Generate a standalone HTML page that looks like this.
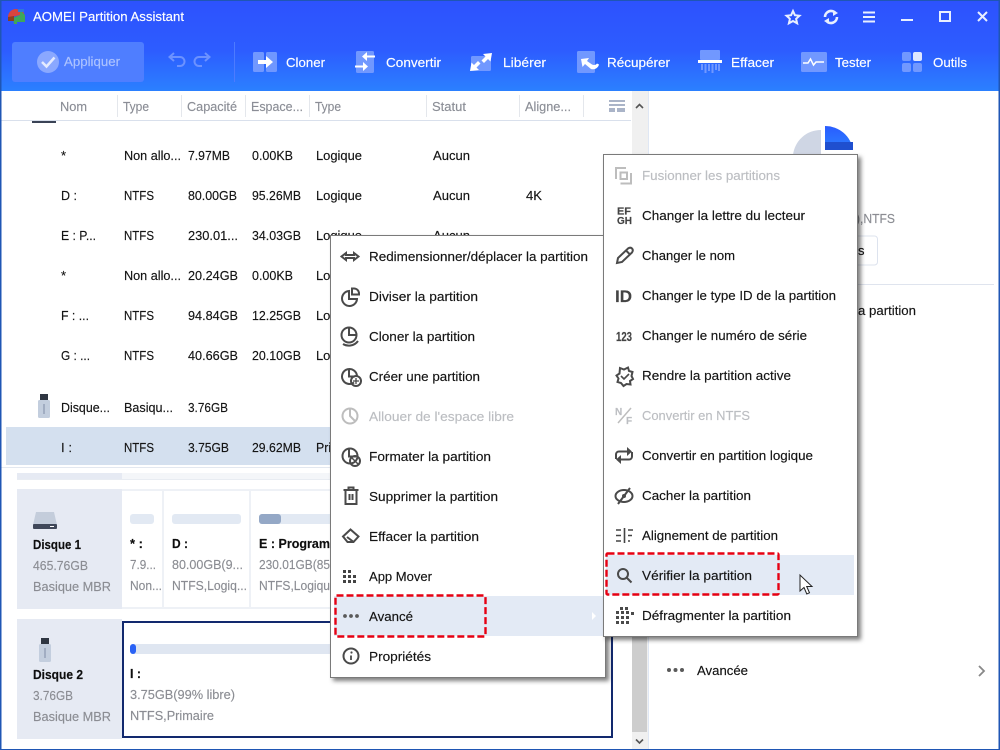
<!DOCTYPE html>
<html lang="fr"><head><meta charset="utf-8"><title>AOMEI Partition Assistant</title>
<style>
html,body{margin:0;padding:0;background:#fff;width:1000px;height:750px;overflow:hidden}
svg{display:block}
text{font-family:"Liberation Sans",sans-serif;font-size:13px;color:#141414;fill:currentColor;stroke:currentColor;stroke-width:.15px}
.h text{color:#8b8e96}
.g{color:#8b8d93}
.d{color:#bcbec2}
.b{font-weight:bold;color:#0e0e0e}
.w{color:#fff}
.ic{color:#444;font-weight:bold}
.i{fill:none;stroke:#4a4a4a;stroke-width:2}
.id{fill:none;stroke:#bdbdbd;stroke-width:2}
</style></head><body>
<svg width="1000" height="750" viewBox="0 0 1000 750" xmlns="http://www.w3.org/2000/svg">
<defs>
<linearGradient id="hd" x1="0" y1="0" x2="0" y2="1"><stop offset="0" stop-color="#2d52fd"/><stop offset=".55" stop-color="#2d5cff"/><stop offset="1" stop-color="#2b80ff"/></linearGradient>
<linearGradient id="pb" x1="0" y1="0" x2="0" y2="1"><stop offset="0" stop-color="#2a5cff"/><stop offset="1" stop-color="#2c80ff"/></linearGradient>
<filter id="sh" x="-5%" y="-5%" width="112%" height="112%"><feDropShadow dx="3" dy="3" stdDeviation="2" flood-color="#000" flood-opacity=".5"/></filter>
</defs>
<rect width="1000" height="750" fill="#fff"/>
<!-- title bar -->
<rect width="1000" height="91" fill="url(#hd)"/>
<rect width="1000" height="1" fill="#1f56b4"/>
<g>
<path d="M8 17a8 8 0 0 1 8-8l5 1 3 3v1l-16 4z" fill="#d8433f"/>
<path d="M20 10l5 5v7h-8v2h-3l-1-6 7-3z" fill="#3fa65a"/>
<path d="M8 17l6-1v5H8z" fill="#8c3f1e"/>
<rect x="18" y="9" width="6" height="3" fill="#2d78d8"/>
</g>
<text class="w" x="33" y="21" textLength="151" lengthAdjust="spacingAndGlyphs">AOMEI Partition Assistant</text>
<!-- window controls -->
<path d="M793 11l1.900 4.200 4.600.5-3.400 3.100 1 4.500-4.100-2.300-4.100 2.300 1-4.500-3.400-3.100 4.600-.5z" fill="none" stroke="#e8efff" stroke-width="2"/>
<path d="M825 17a6 6 0 0 1 10.500-4M837 17a6 6 0 0 1-10.500 4" fill="none" stroke="#e8efff" stroke-width="2.600"/>
<path d="M833 10l5 3-5 3zM829 18l-5 3 5 3z" fill="#e8efff"/>
<path d="M863 12.500h12M863 17h12M863 21.500h12" stroke="#e8efff" stroke-width="2"/>
<path d="M901 20h12" stroke="#e8efff" stroke-width="2"/>
<rect x="940" y="12" width="10" height="9" fill="none" stroke="#e8efff" stroke-width="2"/>
<path d="M978 12l9 9M987 12l-9 9" stroke="#e8efff" stroke-width="2"/>
<!-- toolbar -->
<rect x="12" y="42" width="132" height="40" rx="3" fill="#4f7eff"/>
<circle cx="48" cy="62" r="11" fill="#8aa8ff"/>
<path d="M42 62l4.500 4.500 8-9" fill="none" stroke="#e4ebff" stroke-width="2.500"/>
<text x="64" y="66" textLength="56" lengthAdjust="spacingAndGlyphs" style="color:#adc3ff">Appliquer</text>
<path d="M171 57h9a4 4 0 0 1 0 9h-3M174 53l-4.500 4 4.500 4" fill="none" stroke="#6c92ff" stroke-width="2"/>
<path d="M208 57h-9a4 4 0 0 0 0 9h3M205 53l4.500 4-4.500 4" fill="none" stroke="#6c92ff" stroke-width="2"/>
<rect x="234" y="42" width="1" height="40" fill="#4d7bff"/>
<!-- Cloner -->
<rect x="253" y="52" width="11" height="20" rx="1.500" fill="#7198ff"/><rect x="266" y="52" width="11" height="20" rx="1.500" fill="#6f97ff"/>
<path d="M258 60h8v-4l7 6-7 6v-4h-8z" fill="#fff"/>
<text class="w" x="286" y="67" textLength="39" lengthAdjust="spacingAndGlyphs">Cloner</text>
<!-- Convertir -->
<rect x="356" y="51" width="18" height="22" rx="1.500" fill="#7198ff"/>
<path d="M375 55.500h-8v-3.500l-5 4.500 5 4.500v-3.500h8zM355 65.500h8v-3.500l5 4.500-5 4.500v-3.500h-8z" fill="#fff"/>
<text class="w" x="386" y="67" textLength="55" lengthAdjust="spacingAndGlyphs">Convertir</text>
<!-- Liberer -->
<rect x="471" y="56" width="20" height="15" rx="1.500" fill="#7198ff"/>
<path d="M470 71l9-1-2.500-2.500 4-4-2.500-2.500-4 4-2.500-2.500zM492 53l-9 1 2.500 2.500-4 4 2.500 2.500 4-4 2.500 2.500z" fill="#fff"/>
<text class="w" x="503" y="67" textLength="43" lengthAdjust="spacingAndGlyphs">Libérer</text>
<!-- Recuperer -->
<rect x="577" y="51" width="18" height="22" rx="1.500" fill="#7198ff"/>
<path d="M581 59l8-1-2 3 5 3.500c2 1 4 .5 5-1l2 1c-1 4-5 5.500-8 4.500l-6-5-2.500 3z" fill="#fff"/>
<text class="w" x="607" y="67" textLength="63" lengthAdjust="spacingAndGlyphs">Récupérer</text>
<!-- Effacer -->
<rect x="700" y="50" width="20" height="10" rx="1" fill="#7198ff"/>
<rect x="698" y="60" width="24" height="3" fill="#fff"/>
<path d="M702 64v6M705.500 64v9M709 64v7M712.500 64v9M716 64v6M719 64v7" stroke="#7198ff" stroke-width="2"/>
<text class="w" x="731" y="67" textLength="43" lengthAdjust="spacingAndGlyphs">Effacer</text>
<!-- Tester -->
<rect x="801" y="52" width="26" height="20" rx="1.500" fill="#7198ff"/>
<path d="M803 63h5l2.500-4 3 6 2.500-3h8" fill="none" stroke="#fff" stroke-width="1.500"/>
<text class="w" x="835" y="67" textLength="36" lengthAdjust="spacingAndGlyphs">Tester</text>
<!-- Outils -->
<rect x="902" y="52" width="9" height="9" rx="2" fill="#7198ff"/><rect x="913" y="52" width="9" height="9" rx="2" fill="#dfe7ff"/><rect x="902" y="63" width="9" height="9" rx="2" fill="#7198ff"/><rect x="913" y="63" width="9" height="9" rx="2" fill="#7198ff"/>
<text class="w" x="933" y="67" textLength="34" lengthAdjust="spacingAndGlyphs">Outils</text>

<!-- table header -->
<g class="h">
<text x="60" y="111" textLength="27" lengthAdjust="spacingAndGlyphs">Nom</text>
<text x="123" y="111" textLength="26" lengthAdjust="spacingAndGlyphs">Type</text>
<text x="187" y="111" textLength="50" lengthAdjust="spacingAndGlyphs">Capacité</text>
<text x="251" y="111" textLength="52" lengthAdjust="spacingAndGlyphs">Espace...</text>
<text x="315" y="111" textLength="26" lengthAdjust="spacingAndGlyphs">Type</text>
<text x="432" y="111" textLength="34" lengthAdjust="spacingAndGlyphs">Statut</text>
<text x="525" y="111" textLength="46" lengthAdjust="spacingAndGlyphs">Aligne...</text>
</g>
<path d="M117.500 95v22M181.500 95v22M245.500 95v22M309.500 95v22M426.500 95v22M519.500 95v22M583.500 95v22" stroke="#e4e7ec"/>
<rect x="1" y="120" width="630" height="1" fill="#d9e0ec"/>
<path d="M609 100h16v2h-16zM609 104h16v2h-16zM609 108h6v4h-6zM617 108h8v4h-8z" fill="#aab4c8"/>
<rect x="32" y="121" width="24" height="2" fill="#3a4356"/>
<!-- scrollbar -->
<rect x="632" y="91" width="16" height="659" fill="#f0f0f0"/>
<rect x="632" y="636" width="15" height="96" fill="#cdcdcd"/>
<rect x="648" y="91" width="1" height="658" fill="#dfe7f4"/>
<path d="M636 108l3.500-3.500 3.500 3.500M636 739.500l3.500 3.500 3.500-3.500" fill="none" stroke="#555" stroke-width="1.600"/>

<!-- rows -->
<rect x="6" y="427" width="326" height="38" fill="#d4e0ef"/>
<rect x="1" y="467" width="631" height="1" fill="#e3e8f0"/>
<g>
<text x="61" y="160">*</text><text x="124" y="160" textLength="57" lengthAdjust="spacingAndGlyphs">Non allo...</text><text x="188" y="160" textLength="42" lengthAdjust="spacingAndGlyphs">7.97MB</text><text x="252" y="160" textLength="41" lengthAdjust="spacingAndGlyphs">0.00KB</text><text x="316" y="160" textLength="46" lengthAdjust="spacingAndGlyphs">Logique</text><text x="433" y="160" textLength="37" lengthAdjust="spacingAndGlyphs">Aucun</text>
<text x="61" y="200" textLength="16" lengthAdjust="spacingAndGlyphs">D :</text><text x="124" y="200" textLength="30" lengthAdjust="spacingAndGlyphs">NTFS</text><text x="188" y="200" textLength="49" lengthAdjust="spacingAndGlyphs">80.00GB</text><text x="252" y="200" textLength="49" lengthAdjust="spacingAndGlyphs">95.26MB</text><text x="316" y="200" textLength="46" lengthAdjust="spacingAndGlyphs">Logique</text><text x="433" y="200" textLength="37" lengthAdjust="spacingAndGlyphs">Aucun</text><text x="526" y="200" textLength="16" lengthAdjust="spacingAndGlyphs">4K</text>
<text x="61" y="240" textLength="35" lengthAdjust="spacingAndGlyphs">E : P...</text><text x="124" y="240" textLength="30" lengthAdjust="spacingAndGlyphs">NTFS</text><text x="188" y="240" textLength="50" lengthAdjust="spacingAndGlyphs">230.01...</text><text x="252" y="240" textLength="49" lengthAdjust="spacingAndGlyphs">34.03GB</text><text x="316" y="240" textLength="46" lengthAdjust="spacingAndGlyphs">Logique</text><text x="433" y="240" textLength="37" lengthAdjust="spacingAndGlyphs">Aucun</text>
<text x="61" y="280">*</text><text x="124" y="280" textLength="57" lengthAdjust="spacingAndGlyphs">Non allo...</text><text x="188" y="280" textLength="50" lengthAdjust="spacingAndGlyphs">20.24GB</text><text x="252" y="280" textLength="41" lengthAdjust="spacingAndGlyphs">0.00KB</text><text x="316" y="280" textLength="46" lengthAdjust="spacingAndGlyphs">Logique</text>
<text x="61" y="320" textLength="28" lengthAdjust="spacingAndGlyphs">F : ...</text><text x="124" y="320" textLength="30" lengthAdjust="spacingAndGlyphs">NTFS</text><text x="188" y="320" textLength="50" lengthAdjust="spacingAndGlyphs">94.84GB</text><text x="252" y="320" textLength="49" lengthAdjust="spacingAndGlyphs">12.25GB</text><text x="316" y="320" textLength="46" lengthAdjust="spacingAndGlyphs">Logique</text>
<text x="61" y="360" textLength="29" lengthAdjust="spacingAndGlyphs">G : ...</text><text x="124" y="360" textLength="30" lengthAdjust="spacingAndGlyphs">NTFS</text><text x="188" y="360" textLength="50" lengthAdjust="spacingAndGlyphs">40.66GB</text><text x="252" y="360" textLength="49" lengthAdjust="spacingAndGlyphs">20.10GB</text><text x="316" y="360" textLength="46" lengthAdjust="spacingAndGlyphs">Logique</text>
<text x="61" y="412" textLength="49" lengthAdjust="spacingAndGlyphs">Disque...</text><text x="124" y="412" textLength="49" lengthAdjust="spacingAndGlyphs">Basiqu...</text><text x="188" y="412" textLength="40" lengthAdjust="spacingAndGlyphs">3.76GB</text>
<text x="61" y="452" textLength="11" lengthAdjust="spacingAndGlyphs">I :</text><text x="124" y="452" textLength="30" lengthAdjust="spacingAndGlyphs">NTFS</text><text x="188" y="452" textLength="41" lengthAdjust="spacingAndGlyphs">3.75GB</text><text x="252" y="452" textLength="49" lengthAdjust="spacingAndGlyphs">29.62MB</text><text x="316" y="452" textLength="46" lengthAdjust="spacingAndGlyphs">Primaire</text>
</g>
<!-- USB icon in list -->
<rect x="40" y="394" width="8" height="6" fill="#2f3642"/><rect x="38" y="400" width="12" height="18" rx="1.500" fill="#c3cede"/><path d="M44 404v10" stroke="#7f8ca6"/>

<!-- bottom pane -->
<rect x="17" y="473" width="105" height="6" fill="#e6eaf3"/>
<rect x="122" y="473" width="510" height="6" fill="#f4f6f9"/>
<rect x="17" y="479" width="615" height="1" fill="#e8ecf2"/>
<rect x="17" y="489" width="105" height="120" fill="#e6eaf3"/>
<rect x="122" y="489" width="510" height="120" fill="#eef1f6"/>
<rect x="122" y="491" width="40" height="116" fill="#fff"/><rect x="164" y="491" width="85" height="116" fill="#fff"/><rect x="251" y="491" width="100" height="116" fill="#fff"/>
<path d="M36 512h18l3 13H33z" fill="#c4cddb"/><rect x="33" y="524" width="24" height="5" rx="1" fill="#3f4759"/><path d="M50 526.500h4" stroke="#fff"/>
<text class="b" x="33" y="549" textLength="48" lengthAdjust="spacingAndGlyphs">Disque 1</text>
<text class="g" x="33" y="570" textLength="55" lengthAdjust="spacingAndGlyphs">465.76GB</text>
<text class="g" x="33" y="591" textLength="78" lengthAdjust="spacingAndGlyphs">Basique MBR</text>
<rect x="130" y="514" width="24" height="10" rx="3" fill="#e2e9f3"/>
<rect x="172" y="514" width="69" height="10" rx="3" fill="#e2e9f3"/>
<rect x="259" y="514" width="90" height="10" rx="3" fill="#e2e9f3"/><rect x="259" y="514" width="22" height="10" rx="3" fill="#94a8c6"/>
<text class="b" x="130" y="548" textLength="13" lengthAdjust="spacingAndGlyphs">* :</text>
<text class="g" x="130" y="569" textLength="26" lengthAdjust="spacingAndGlyphs">7.9...</text>
<text class="g" x="130" y="590" textLength="32" lengthAdjust="spacingAndGlyphs">Non...</text>
<text class="b" x="172" y="548" textLength="16" lengthAdjust="spacingAndGlyphs">D :</text>
<text class="g" x="172" y="569" textLength="71" lengthAdjust="spacingAndGlyphs">80.00GB(9...</text>
<text class="g" x="172" y="590" textLength="75" lengthAdjust="spacingAndGlyphs">NTFS,Logiq...</text>
<text class="b" x="259" y="548" textLength="71" lengthAdjust="spacingAndGlyphs">E : Program</text>
<text class="g" x="259" y="569" textLength="71" lengthAdjust="spacingAndGlyphs">230.01GB(85</text>
<text class="g" x="259" y="590" textLength="71" lengthAdjust="spacingAndGlyphs">NTFS,Logiqu</text>

<rect x="17" y="619" width="105" height="120" fill="#e6eaf3"/>
<rect x="123" y="622" width="489" height="115" fill="#fff" stroke="#12296e" stroke-width="2"/>
<rect x="41" y="638" width="8" height="6" fill="#2f3642"/><rect x="39" y="644" width="12" height="18" rx="1.500" fill="#c3cede"/><path d="M45 648v10" stroke="#7f8ca6"/>
<text class="b" x="33" y="679" textLength="50" lengthAdjust="spacingAndGlyphs">Disque 2</text>
<text class="g" x="33" y="700" textLength="40" lengthAdjust="spacingAndGlyphs">3.76GB</text>
<text class="g" x="33" y="721" textLength="78" lengthAdjust="spacingAndGlyphs">Basique MBR</text>
<rect x="130" y="644" width="475" height="10" rx="3" fill="#dfe6f1"/><rect x="130" y="644" width="6" height="10" rx="3" fill="#2a62f5"/>
<text class="b" x="130" y="678" textLength="11" lengthAdjust="spacingAndGlyphs">I :</text>
<text class="g" x="130" y="699" textLength="105" lengthAdjust="spacingAndGlyphs">3.75GB(99% libre)</text>
<text class="g" x="130" y="720" textLength="84" lengthAdjust="spacingAndGlyphs">NTFS,Primaire</text>

<!-- right pane -->
<path d="M821 130v24h28v8h-56v-7a28 28 0 0 1 28-25z" fill="#cfd6e4"/>
<path d="M825 126a28 28 0 0 1 28 24h-28z" fill="url(#pb)"/><rect x="825" y="142" width="28" height="8" fill="#1f4fcf"/>
<text class="g" x="856" y="223" textLength="39" lengthAdjust="spacingAndGlyphs">),NTFS</text>
<rect x="780" y="236" width="97.500" height="29" rx="3" fill="#fff" stroke="#dde3ee"/>
<text x="858" y="255">s</text>
<rect x="855" y="284" width="139" height="1" fill="#dfe4ee"/>
<text x="858" y="315" textLength="58" lengthAdjust="spacingAndGlyphs">a partition</text>
<circle cx="669" cy="670" r="2" fill="#5a5a5a"/><circle cx="675.500" cy="670" r="2" fill="#5a5a5a"/><circle cx="682" cy="670" r="2" fill="#5a5a5a"/>
<text x="697" y="675" textLength="51" lengthAdjust="spacingAndGlyphs">Avancée</text>
<path d="M979 666l5 5-5 5" fill="none" stroke="#888" stroke-width="1.800"/>

<!-- window frame -->
<rect x="0" y="0" width="1.500" height="750" fill="#1f56b4"/><rect x="998.500" y="0" width="1.500" height="750" fill="#1f56b4"/><rect x="0" y="749" width="1000" height="1" fill="#1f56b4"/>

<!-- Menu 1 -->
<rect x="330.500" y="235.500" width="275" height="442" fill="#fff" stroke="#7a7a7a" filter="url(#sh)"/>
<rect x="334" y="596" width="270" height="40" fill="#e3eaf5"/>
<path d="M592 612l4 4-4 4z" fill="#fff"/>
<g>
<text x="369" y="261" textLength="219" lengthAdjust="spacingAndGlyphs">Redimensionner/déplacer la partition</text>
<text x="369" y="301" textLength="109" lengthAdjust="spacingAndGlyphs">Diviser la partition</text>
<text x="369" y="341" textLength="106" lengthAdjust="spacingAndGlyphs">Cloner la partition</text>
<text x="369" y="381" textLength="111" lengthAdjust="spacingAndGlyphs">Créer une partition</text>
<text class="d" x="369" y="421" textLength="145" lengthAdjust="spacingAndGlyphs">Allouer de l'espace libre</text>
<text x="369" y="461" textLength="122" lengthAdjust="spacingAndGlyphs">Formater la partition</text>
<text x="369" y="501" textLength="129" lengthAdjust="spacingAndGlyphs">Supprimer la partition</text>
<text x="369" y="541" textLength="110" lengthAdjust="spacingAndGlyphs">Effacer la partition</text>
<text x="369" y="581" textLength="63" lengthAdjust="spacingAndGlyphs">App Mover</text>
<text x="369" y="621" textLength="44" lengthAdjust="spacingAndGlyphs">Avancé</text>
<text x="369" y="661" textLength="62" lengthAdjust="spacingAndGlyphs">Propriétés</text>
</g>
<!-- menu 1 icons -->
<path d="M346 253l-4.500 3.500 4.500 3.500v-2h8v2l4.500-3.500-4.500-3.500v2h-8z" class="i"/>
<path d="M349 291a7.500 7.500 0 1 0 8 8h-8z" class="i"/><path d="M352 288.500h2a5 5 0 0 1 5 5v1h-7z" class="i"/>
<circle cx="349" cy="335" r="7.500" class="i"/><path d="M349 328v7h7.500M343 344c4 2.500 11 2.500 15-3" class="i"/>
<path d="M349 369v7.500h6M354 382.500a7.500 7.500 0 1 1 3-6.500" class="i"/><circle cx="356" cy="381" r="5" fill="#fff" class="i"/><path d="M353 381h6M356 378v6" stroke="#4a4a4a" stroke-width="1.300"/>
<circle cx="350" cy="416" r="7.500" class="id"/><path d="M350 409v7l5 5" class="id"/>
<circle cx="350" cy="456" r="7.500" class="i"/><path d="M349 449v7.500h7" class="i"/><circle cx="355" cy="461" r="5" fill="#fff" class="i"/><path d="M352 458l6 6" stroke="#4a4a4a" stroke-width="1.500"/>
<path d="M343.500 490h15M348.500 490v-2.500h5v2.500M345.500 490v14h11v-14M349.500 494v6M352.500 494v6" class="i"/>
<path d="M343 536.500l7.500-7 8 7-5 5.500h-6z" class="i"/><path d="M347 537l6 4.500" class="i"/>
<path d="M343 570h3v3h-3zM348 570h3v3h-3zM343 575h3v3h-3zM348 575h3v3h-3zM353 575h3v3h-3zM343 580h3v3h-3zM348 580h3v3h-3zM353 580h3v3h-3z" fill="#444"/>
<circle cx="345" cy="616" r="1.900" fill="#5a5a5a"/><circle cx="351" cy="616" r="1.900" fill="#5a5a5a"/><circle cx="357" cy="616" r="1.900" fill="#5a5a5a"/>
<circle cx="351" cy="656" r="7.500" class="i"/><path d="M351 655.500v4.500" stroke="#4a4a4a" stroke-width="1.800"/><circle cx="351.500" cy="652.500" r="1.100" fill="#4a4a4a"/>
<rect x="335.500" y="595.500" width="150" height="41" rx="1" fill="none" stroke="#e60012" stroke-width="2.400" stroke-dasharray="7 3"/>

<!-- Menu 2 -->
<rect x="603.500" y="154.500" width="254" height="482" fill="#fff" stroke="#7a7a7a" filter="url(#sh)"/>
<rect x="606" y="555" width="248" height="40" fill="#e3eaf5"/>
<g>
<text class="d" x="642" y="180" textLength="138" lengthAdjust="spacingAndGlyphs">Fusionner les partitions</text>
<text x="642" y="220" textLength="163" lengthAdjust="spacingAndGlyphs">Changer la lettre du lecteur</text>
<text x="642" y="260" textLength="93" lengthAdjust="spacingAndGlyphs">Changer le nom</text>
<text x="642" y="300" textLength="194" lengthAdjust="spacingAndGlyphs">Changer le type ID de la partition</text>
<text x="642" y="340" textLength="165" lengthAdjust="spacingAndGlyphs">Changer le numéro de série</text>
<text x="642" y="380" textLength="149" lengthAdjust="spacingAndGlyphs">Rendre la partition active</text>
<text class="d" x="642" y="420" textLength="108" lengthAdjust="spacingAndGlyphs">Convertir en NTFS</text>
<text x="642" y="460" textLength="171" lengthAdjust="spacingAndGlyphs">Convertir en partition logique</text>
<text x="642" y="500" textLength="109" lengthAdjust="spacingAndGlyphs">Cacher la partition</text>
<text x="642" y="540" textLength="136" lengthAdjust="spacingAndGlyphs">Alignement de partition</text>
<text x="642" y="580" textLength="110" lengthAdjust="spacingAndGlyphs">Vérifier la partition</text>
<text x="642" y="620" textLength="149" lengthAdjust="spacingAndGlyphs">Défragmenter la partition</text>
</g>
<!-- menu 2 icons -->
<path d="M616 179v-11h10M631 173v10.500h-10.500" class="id"/><rect x="620.500" y="172.500" width="6.500" height="6.500" class="id"/>
<text class="ic" x="617" y="214.500" textLength="14" lengthAdjust="spacingAndGlyphs" style="font-size:10px">EF</text>
<text class="ic" x="617" y="224" textLength="15" lengthAdjust="spacingAndGlyphs" style="font-size:10px">GH</text>
<path d="M617 263l1-5 10-9.500c1.500-1 3-1 4 0s1 2.500 0 4l-10 9.500zM626 250.500l4 4" class="i"/>
<text class="ic" x="615" y="302" textLength="17" lengthAdjust="spacingAndGlyphs" style="font-size:17px">ID</text>
<text class="ic" x="616" y="341" textLength="16" lengthAdjust="spacingAndGlyphs" style="font-size:13px">123</text>
<path d="M620 368l4 1.500 4-2 1 3.500 3.500 1-1 4 1.500 3-3 2 .5 3.500-4-.5-3 2-2.500-3-3.500-1 1-3.500-2-3 3-2z" class="i"/><path d="M621 376l3 3 5-5" class="i" style="stroke-width:1.600"/>
<text class="d" x="615" y="415" style="font-size:10px;font-weight:bold">N</text><path d="M618 423l13-15" class="id" style="stroke-width:1.500"/><text class="d" x="626" y="424" style="font-size:10px;font-weight:bold">F</text>
<path d="M616 459v-4.500a3 3 0 0 1 3-3h10M632 452v4.500a3 3 0 0 1-3 3h-10" class="i"/><path d="M627 447l5 4.500-5 4.500zM621 455l-5 4.500 5 4.500z" fill="#4a4a4a"/>
<ellipse cx="624" cy="496" rx="8.500" ry="6" class="i"/><circle cx="624" cy="496" r="2" fill="#4a4a4a"/><path d="M618 504l12-16" class="i"/>
<path d="M616 530h5M616 535.500h5M616 541h5M624.500 528v15M628 530h5M628 535.500h4M628 541h2" stroke="#444" stroke-width="1.600" fill="none"/>
<circle cx="623" cy="574" r="5" class="i"/><path d="M627 578l4.500 4.500" class="i"/>
<path d="M620 607h3v3h-3zM625 607h3v3h-3zM616 611h3v3h-3zM621 611h3v3h-3zM626 611h3v3h-3zM631 612h3v3h-3zM616 616h3v3h-3zM621 616h3v3h-3zM626 616h3v3h-3zM616 621h3v3h-3zM621 621h3v3h-3zM626 621h3v3h-3z" fill="#4a4a4a"/>
<rect x="606.500" y="553.500" width="172" height="41" rx="1" fill="none" stroke="#e60012" stroke-width="2.400" stroke-dasharray="7 3"/>
<!-- cursor -->
<path d="M800 575v16l4-3.500 2.800 6.500 2.700-1.200-2.800-6.300h5.300z" fill="#fff" stroke="#222" stroke-width="1"/>
</svg>
</body></html>
